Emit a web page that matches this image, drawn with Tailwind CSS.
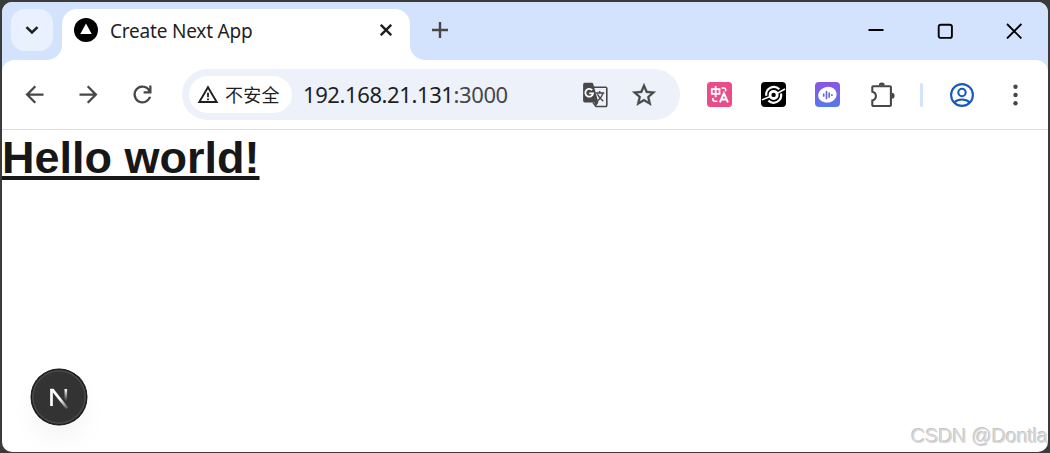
<!DOCTYPE html>
<html lang="zh-CN">

<head>
    <meta charset="UTF-8">
    <meta name="viewport" content="width=device-width, initial-scale=1.0">
    <title>Create Next App</title>
    <script src="https://cdn.jsdelivr.net/npm/@tailwindcss/browser@4"></script>
</head>

<body class="h-screen overflow-hidden bg-[#3b3b3b] px-[2px] pt-[2px] pb-[1px] font-['Open_Sans','Noto_Sans_CJK_SC',sans-serif]">
    <div class="relative flex h-full flex-col overflow-hidden rounded-[10px] bg-white">
        <!-- Tab strip -->
        <header class="flex h-[58px] shrink-0 bg-[#d3e3fd] pt-[7px] pl-[9px]">
            <button class="flex size-[42px] items-center justify-center rounded-[14px] bg-[#e9f1fe]">
                <svg class="size-[14px]" viewBox="0 0 14 14" fill="none" stroke="#1f1f1f" stroke-width="2.5"><path d="M1.5 4.2 7 9.5l5.5-5.3" /></svg>
            </button>
            <div class="relative ml-[9px] flex h-[51px] w-[348px] items-center rounded-t-[15px] bg-white pb-[8px] pl-[12px]">
                <svg class="absolute bottom-0 -left-[15px] size-[15px]" viewBox="0 0 15 15" fill="#fff"><path d="M15 0v15H0A15 15 0 0 0 15 0" /></svg>
                <svg class="absolute -right-[15px] bottom-0 size-[15px]" viewBox="0 0 15 15" fill="#fff"><path d="M0 0v15h15A15 15 0 0 1 0 0" /></svg>
                <svg class="mb-px size-[24px]" viewBox="0 0 24 24"><circle cx="12" cy="12" r="12" fill="#000" /><path d="M12 5.6 17.7 16H6.3z" fill="#fff" /></svg>
                <span class="mt-px ml-[12px] font-['Noto_Sans'] text-[19px] leading-6 tracking-[-0.2px] whitespace-nowrap text-[#1f1f1f]">Create Next App</span>
                <svg class="mr-[18px] mb-px ml-auto size-[12px]" viewBox="0 0 12 12" fill="none" stroke="#1f1f1f" stroke-width="2.4"><path d="m.8.8 10.4 10.4M11.2.8.8 11.2" /></svg>
            </div>
            <svg class="mt-[13px] ml-[22px] size-[16px]" viewBox="0 0 16 16" fill="none" stroke="#474747" stroke-width="2.4"><path d="M8 0v16M0 8h16" /></svg>
            <div class="mt-[14px] mr-[26px] ml-auto flex h-[16px] gap-[53px]">
                <svg class="size-[16px]" viewBox="0 0 16 16" stroke="#000" stroke-width="2"><path d="M.5 7h15" /></svg>
                <svg class="size-[16px]" viewBox="0 0 16 16" fill="none" stroke="#000" stroke-width="1.9"><rect x="1.7" y="1.7" width="13.2" height="13.2" rx="2" /></svg>
                <svg class="size-[16px]" viewBox="0 0 16 16" fill="none" stroke="#000" stroke-width="1.9"><path d="m1 1 14.4 14.4M15.4 1 1 15.4" /></svg>
            </div>
        </header>

        <!-- Toolbar -->
        <div class="h-[70px] shrink-0 bg-[#d3e3fd]">
            <div class="flex h-full items-center rounded-t-[12px] border-b border-[#dddddd] bg-white pl-[19px]">
                <div class="flex gap-[27px]">
                    <svg class="size-[27px]" viewBox="0 0 24 24" fill="#474747"><path d="M20 11H7.83l5.59-5.59L12 4l-8 8 8 8 1.41-1.41L7.83 13H20z" /></svg>
                    <svg class="size-[27px]" viewBox="0 0 24 24" fill="#474747"><path d="M4 11h12.17l-5.59-5.59L12 4l8 8-8 8-1.41-1.41L16.17 13H4z" /></svg>
                    <svg class="size-[27px]" viewBox="0 0 24 24" fill="#474747"><path d="M12 20a8 8 0 1 1 6-13.25V4h2v7h-7V9h4.2A6 6 0 1 0 17.65 14h2.1A8 8 0 0 1 12 20" /></svg>
                </div>
                <div class="ml-[26px] flex h-[51px] w-[498px] items-center rounded-full bg-[#ecf1fa] pl-[7px]">
                    <div class="flex h-[37px] w-[103px] items-center rounded-full bg-white pl-[8px]">
                        <svg class="size-[22px]" viewBox="0 0 22 22" fill="none" stroke="#1f1f1f" stroke-width="1.9"><path d="M11 3.2 19.7 18H2.3z" /><path d="M11 8.7v4.5M11 14.6v1.7" stroke-width="1.8" /></svg>
                        <span class="mb-[2px] ml-[6px] font-['Noto_Sans_CJK_SC'] text-[18px] leading-6 tracking-[0.3px] whitespace-nowrap text-[#1f1f1f]">不安全</span>
                    </div>
                    <span class="mb-[2px] ml-[11px] font-['Noto_Sans'] text-[22px] leading-7 tracking-[-0.4px] whitespace-nowrap text-[#1f1f1f]">192.168.21.131<span class="text-[#474747]">:3000</span></span>
                    <svg class="mr-[22px] ml-auto size-[26px]" viewBox="0 0 26 26">
                        <path d="M11 5.2h12.6a1.2 1.2 0 0 1 1.2 1.2v16.9a1.2 1.2 0 0 1-1.2 1.2H14l-3-4" fill="#ecf1fa" stroke="#474747" stroke-width="1.6" />
                        <path d="M2.8.7h7.1c.6 0 1 .4 1.2.9l5.3 18.8H2.8A1.7 1.7 0 0 1 1.1 18.7V2.4A1.7 1.7 0 0 1 2.8.7m9.9 19.7h3.7l-2.7 4z" fill="#474747" />
                        <path d="M10.2 8.2a3.9 3.9 0 1 0 .9 3.2H7.3" fill="none" stroke="#fff" stroke-width="1.8" />
                        <path d="M13.5 11h8.8M17.7 9v2M20.7 11c-.5 3.3-2.6 5.8-5 7.6M15.500 12.3c1 2.400 3.200 4.800 5.800 7" fill="none" stroke="#474747" stroke-width="1.5" />
                    </svg>
                    <svg class="mr-[22px] size-[28px]" viewBox="0 0 24 24" fill="#474747" stroke="#474747" stroke-width="0.35"><path d="m22 9.24-7.19-.62L12 2 9.19 8.63 2 9.24l5.46 4.73L5.82 21 12 17.27 18.18 21l-1.63-7.03zM12 15.4l-3.76 2.27 1-4.28-3.32-2.88 4.38-.38L12 6.1l1.71 4.04 4.38.38-3.32 2.88 1 4.28z" /></svg>
                </div>

                <!-- Extensions -->
                <div class="ml-[27px] flex items-center gap-[29px]">
                    <svg class="size-[25px]" viewBox="0 0 25 25" fill="none" stroke="#fff" stroke-width="1.8">
                        <rect width="25" height="25" rx="3.5" fill="#ea4c89" stroke="none" />
                        <path d="M4.8 7.2h7.7v4.7H4.8zM8.65 4v11.2" />
                        <path d="M14.5 6h2.2c1.3 0 2 .7 2 2.2v1M5.8 16v1c0 1.5.7 2.2 2 2.2h2.5" stroke-width="1.6" />
                        <path d="m12.9 20.3 4-9 4 9M14.2 17.5h5.4" stroke-width="2" />
                    </svg>
                    <svg class="size-[25px]" viewBox="0 0 25 25" fill="none" stroke="#fff">
                        <rect width="25" height="25" rx="4" fill="#000" stroke="none" />
                        <path d="M5.3 13.8A7.6 7.6 0 0 1 18.3 7.3M20 11.5A7.6 7.6 0 0 1 7.4 18.6" stroke-width="2.2" />
                        <circle cx="12.6" cy="12.9" r="3.6" stroke-width="2.8" />
                        <path d="M1 17.9 8.6 14.8M24 7 16.6 11.2" stroke-width="1.5" />
                    </svg>
                    <svg class="size-[25px]" viewBox="0 0 25 25" fill="none">
                        <defs><linearGradient id="voice" x1="0" y1="0" x2="0" y2="1"><stop stop-color="#8b55e6" /><stop offset="1" stop-color="#5479ea" /></linearGradient></defs>
                        <rect width="25" height="25" rx="4" fill="url(#voice)" />
                        <path d="M12 4.9c4.9-.6 9.6 2.5 9.600 7.400 0 5-4.500 8.300-9.300 8.300S3.200 18 3.200 13.500 7.300 5.400 12 4.900" fill="#fff" />
                        <path d="M8.700 12.200v1.800M11.500 9.700v6.700M14.200 11.200v3.800M16.900 12.800v.4" stroke="#6868e8" stroke-width="1.700" stroke-linecap="round" />
                    </svg>
                    <svg class="size-[26px]" viewBox="0 0 26 26" fill="none" stroke="#474747" stroke-width="2.1">
                        <path d="M4.300 4.200h16.600a1 1 0 0 1 1 1v17.800a1 1 0 0 1-1 1H4.300a1 1 0 0 1-1-1v-4.600c4.800-1.100 4.800-7.600 0-8.700V5.200a1 1 0 0 1 1-1z" />
                        <path d="M9.800 3.500a3 3 0 0 1 6 0zM22.600 10.800a3 3 0 0 1 0 6z" fill="#474747" stroke="none" />
                    </svg>
                </div>
                <div class="ml-[25px] h-[24px] w-[3px] rounded-full bg-[#d3e3fd]"></div>
                <svg class="ml-[27px] size-[24px]" viewBox="0 0 24 24" fill="none" stroke="#185abc" stroke-width="2.1">
                    <circle cx="12" cy="12" r="10.9" />
                    <circle cx="12" cy="9.5" r="3.7" />
                    <path d="M4.3 19.5c4-4 11.4-4 15.4 0" />
                </svg>
                <svg class="ml-[39px] h-[22px] w-[5px]" viewBox="0 0 5 22" fill="#474747"><circle cx="2.5" cy="2.7" r="2.2" /><circle cx="2.5" cy="11" r="2.2" /><circle cx="2.5" cy="19.3" r="2.2" /></svg>
            </div>
        </div>

        <!-- Page -->
        <main class="grow pt-px">
            <h1 class="font-['Liberation_Sans',Arial,sans-serif] text-[45px] leading-[54px] font-bold whitespace-nowrap text-[#171717] underline">Hello world!</h1>
        </main>

        <!-- Dev tools badge -->
        <div class="absolute top-[367px] left-[29px] flex size-[56px] items-center justify-center rounded-full bg-[#333] shadow-[0_0_0_0.5px_#171717,inset_0_0_0_1px_#171717,inset_0_0_0_2.5px_#4b4b4b,0_16px_32px_-8px_rgba(0,0,0,0.08)]">
            <svg class="size-[24px]" viewBox="0 0 24 24" fill="none">
                <defs>
                    <linearGradient id="diag" gradientUnits="userSpaceOnUse" x1="14" y1="14" x2="20" y2="23"><stop stop-color="#fff" /><stop offset="1" stop-color="#fff" stop-opacity="0.2" /></linearGradient>
                    <linearGradient id="stem" gradientUnits="userSpaceOnUse" x1="0" y1="4" x2="0" y2="16"><stop stop-color="#fff" /><stop offset="1" stop-color="#fff" stop-opacity="0" /></linearGradient>
                </defs>
                <path d="M4.500 21V4" stroke="#fff" stroke-width="2.700" />
                <path d="M3.200 3.800h3.300L21.200 22.500l-2 1.700L5.300 6.800z" fill="url(#diag)" />
                <path d="M18.800 4v12" stroke="url(#stem)" stroke-width="2.600" />
            </svg>
        </div>

        <span class="absolute right-0 bottom-[4px] font-['Liberation_Sans',Arial,sans-serif] text-[20px] leading-6 tracking-[-0.3px] whitespace-nowrap text-[#d8d8d8] [text-shadow:-1px_-1px_0_#c4c4c4]">CSDN @Dontla</span>
    </div>
</body>

</html>
